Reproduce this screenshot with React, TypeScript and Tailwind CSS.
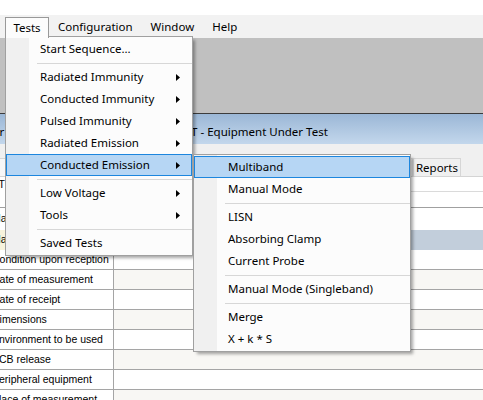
import React from "react";

type MenuEntry =
  | { kind: "item"; label: string; sub?: boolean; hot?: boolean }
  | { kind: "sep" };

const testsMenu: MenuEntry[] = [
  { kind: "item", label: "Start Sequence..." },
  { kind: "sep" },
  { kind: "item", label: "Radiated Immunity", sub: true },
  { kind: "item", label: "Conducted Immunity", sub: true },
  { kind: "item", label: "Pulsed Immunity", sub: true },
  { kind: "item", label: "Radiated Emission", sub: true },
  { kind: "item", label: "Conducted Emission", sub: true, hot: true },
  { kind: "sep" },
  { kind: "item", label: "Low Voltage", sub: true },
  { kind: "item", label: "Tools", sub: true },
  { kind: "sep" },
  { kind: "item", label: "Saved Tests" },
];

const emissionMenu: MenuEntry[] = [
  { kind: "item", label: "Multiband", hot: true },
  { kind: "item", label: "Manual Mode" },
  { kind: "sep" },
  { kind: "item", label: "LISN" },
  { kind: "item", label: "Absorbing Clamp" },
  { kind: "item", label: "Current Probe" },
  { kind: "sep" },
  { kind: "item", label: "Manual Mode (Singleband)" },
  { kind: "sep" },
  { kind: "item", label: "Merge" },
  { kind: "item", label: "X + k * S" },
];

const dataRows = [
  "Condition upon reception",
  "Date of measurement",
  "Date of receipt",
  "Dimensions",
  "Environment to be used",
  "PCB release",
  "Peripheral equipment",
  "Place of measurement",
];

function SubArrow() {
  return (
    <svg width="4" height="7" viewBox="0 0 4 7" className="shrink-0">
      <path d="M0 0L4 3.5L0 7Z" fill="#000" />
    </svg>
  );
}

function DropMenu({ entries, className }: { entries: MenuEntry[]; className: string }) {
  return (
    <div
      className={`absolute z-20 border border-[#a0a0a0] bg-[linear-gradient(to_right,#f0f0f0_0,#f0f0f0_23px,#fcfcfc_23px)] py-px shadow-[3px_3px_3px_-1px_rgba(0,0,0,0.35)] ${className}`}
    >
      {entries.map((e, i) =>
        e.kind === "sep" ? (
          <div key={i} className="flex h-[6px] items-center pl-[31px]">
            <div className="h-px w-full bg-[#d7d7d7]" />
          </div>
        ) : (
          <div
            key={i}
            className={`flex h-[22px] items-center justify-between border pl-[33px] pr-[11px] ${
              e.hot ? "border-[#1c86de] bg-[#b6d6f4]" : "border-transparent"
            }`}
          >
            <span className="whitespace-nowrap">{e.label}</span>
            {e.sub && <SubArrow />}
          </div>
        )
      )}
    </div>
  );
}

function MenuBar() {
  return (
    <div className="flex h-[23px] bg-[#f2f2f2] pl-[5px]">
      <div className="relative z-30 mt-[2px] flex h-[21px] w-[44px] items-center justify-center border border-b-0 border-[#999999] bg-[#fcfcfc] pb-[1px]">
        Tests
      </div>
      {["Configuration", "Window", "Help"].map((m) => (
        <div key={m} className="flex items-center px-[9px]">
          {m}
        </div>
      ))}
    </div>
  );
}

function Tab({ label, className }: { label: string; className: string }) {
  return (
    <div
      className={`flex h-[18px] items-center justify-center border border-b-0 border-[#d6d6d6] ${className}`}
    >
      {label}
    </div>
  );
}

function ChildWindow() {
  return (
    <div className="border-t border-[#3c3c3c]">
      <div className="flex h-[30px] items-center bg-[linear-gradient(#9bb7d6,#c3d7ec)] pt-[6px] whitespace-nowrap">
        <span className="-ml-[28px]">Editor</span>
        <span className="ml-[172px]">EUT - Equipment Under Test</span>
      </div>
      <div className="bg-[#f0f0f0] pt-[14px]">
        <div className="-ml-[6px] flex">
          <Tab label="General" className="w-[90px] bg-[#f7f7f7]" />
          <Tab label="Test Setup" className="w-[110px] bg-[#f0f0f0]" />
          <Tab label="Equipment" className="w-[110px] bg-[#f0f0f0]" />
          <Tab label="Results" className="w-[109px] bg-[#f0f0f0]" />
          <Tab label="Reports" className="w-[48px] bg-[#f0f0f0]" />
        </div>
        <div className="border-t border-[#d4d4d4] bg-white font-['Liberation_Sans',Arial,sans-serif] text-[10.5px]">
          <div className="-ml-[20px]">
            <div className="flex h-[15px]">
              <div className="w-[134px] pl-[4px] leading-[15px]">EUT</div>
              <div className="flex-1 border-b border-[#dadada]" />
            </div>
            <div className="h-[16px] border-b border-[#a0a0a0]" />
            <div className="flex h-[22px] items-center pl-[12px]">Manufacturer</div>
            <div className="flex h-[20px]">
              <div className="flex w-[134px] items-center bg-[#f7f3dc] pl-[12px]">Manufacturer data</div>
              <div className="flex-1 bg-[#c2cedb]" />
            </div>
            {dataRows.map((r, i) => (
              <div key={r} className="flex h-[20px] border-b border-[#a5a5a5]">
                <div className="flex w-[134px] items-center border-r border-[#a5a5a5] pl-[12px] whitespace-nowrap">
                  {r}
                </div>
                <div className={`flex-1 ${i % 2 === 1 ? "bg-[#f8f7f4]" : "bg-white"}`} />
              </div>
            ))}
          </div>
        </div>
      </div>
    </div>
  );
}

export default function App() {
  return (
    <div className="relative h-[400px] w-[483px] overflow-hidden bg-white font-['Noto_Sans',sans-serif] text-[11.5px] text-black">
      <div className="h-[15px]" />
      <MenuBar />
      <div className="h-[75px] bg-[#c0c0c0]" />
      <ChildWindow />
      <DropMenu entries={testsMenu} className="left-[5px] top-[36px] w-[188px]" />
      <DropMenu entries={emissionMenu} className="left-[193px] top-[154px] w-[218px]" />
    </div>
  );
}
